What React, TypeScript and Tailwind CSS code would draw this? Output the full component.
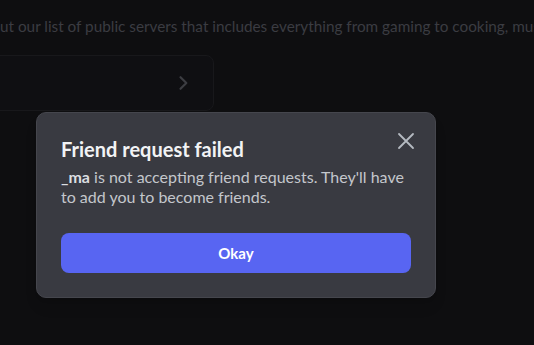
import React from "react";

export default function App() {
  return (
    <div
      className="relative w-[534px] h-[345px] overflow-hidden bg-[#0e0e10]"
      style={{ fontFamily: 'Lato, "Noto Sans", sans-serif' }}
    >
      <div className="flex flex-col">
        <p className="pt-[16px] text-[15.3px] leading-[20px] text-[#3b3c42] whitespace-nowrap overflow-hidden">
          ut our list of public servers that includes everything from gaming to cooking, music, anime and more.
        </p>
        <div className="mt-[19px] ml-[-20px] w-[234px] h-[56px] rounded-[8px] border border-[#18181b] bg-[#0f0f12] flex items-center justify-end pr-[20px]">
          <svg width="20" height="20" viewBox="0 0 24 24" fill="none" stroke="#3c3d42" strokeWidth="2.6" strokeLinecap="round" strokeLinejoin="round">
            <path d="M9 5l7 7-7 7" />
          </svg>
        </div>
      </div>

      <div className="absolute left-[36px] top-[112px] w-[400px] rounded-[10px] border border-[#45464d] bg-[#393a41] px-[24px] pt-[24px] pb-[24px] shadow-lg">
        <button className="absolute right-[17px] top-[16px] text-[#b5bac1]">
          <svg width="24" height="24" viewBox="0 0 24 24" fill="none" stroke="currentColor" strokeWidth="1.8" strokeLinecap="round">
            <path d="M5 5l14 14M19 5L5 19" />
          </svg>
        </button>
        <h2 className="text-[20px] leading-[24px] font-bold text-[#f2f3f5]">Friend request failed</h2>
        <p className="mt-[6px] text-[16px] leading-[20px] text-[#c4c7cc]">
          <span className="font-bold text-[#dbdee1]">_ma</span> is not accepting friend requests. They'll have to add you to become friends.
        </p>
        <button className="mt-[26px] w-full h-[40px] rounded-[8px] bg-[#5865f2] text-white text-[15px] font-bold">
          Okay
        </button>
      </div>
    </div>
  );
}
